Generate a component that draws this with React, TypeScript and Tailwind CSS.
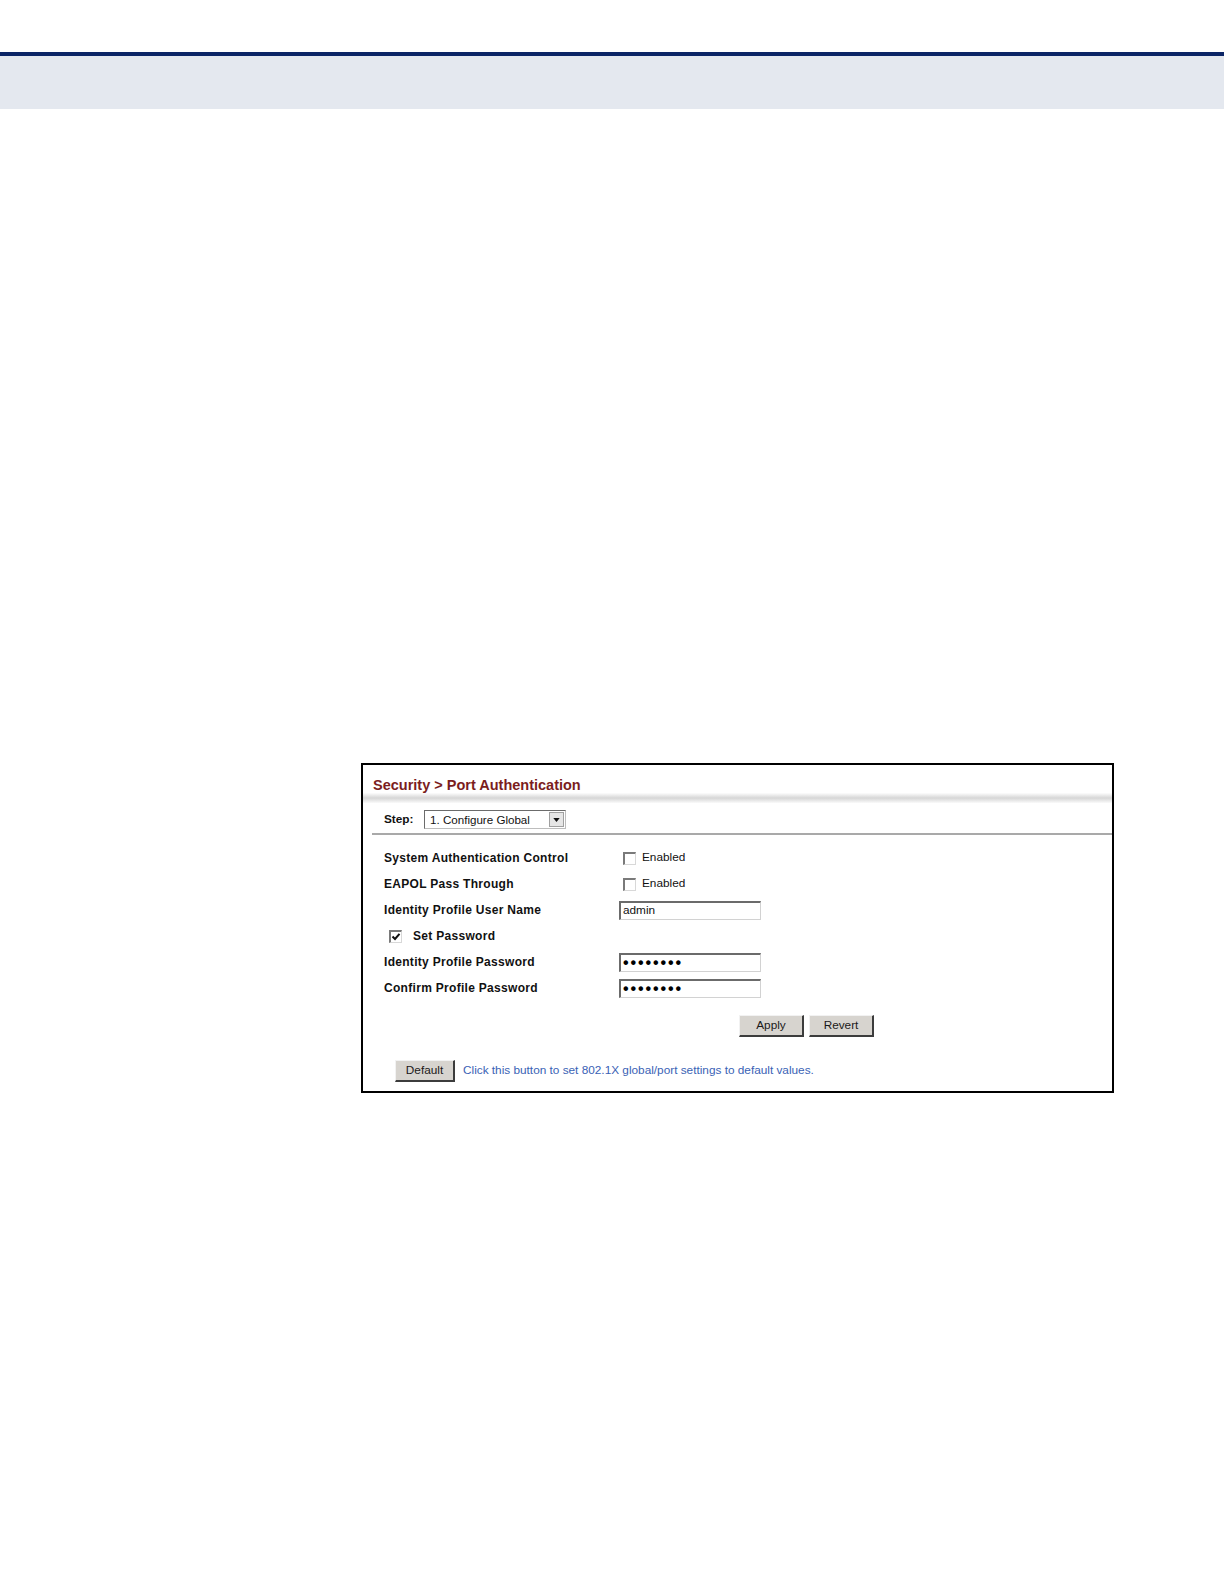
import React from "react";

const FONT = "font-['Liberation_Sans',Arial,sans-serif]";

function Checkbox({ checked = false }: { checked?: boolean }) {
  return (
    <span className="relative inline-block w-[13px] h-[13px] bg-white border-t-2 border-l-2 border-t-[#7a7a7a] border-l-[#7a7a7a] border-b border-r border-b-[#d8d8d8] border-r-[#d8d8d8] shrink-0">
      {checked && (
        <svg viewBox="0 0 10 10" className="absolute left-[0px] top-[0px] w-[10px] h-[10px]">
          <path d="M1.5 4.5 L4 7 L8.5 1.8" fill="none" stroke="#111" strokeWidth="2" />
        </svg>
      )}
    </span>
  );
}

function TextBox({ children }: { children: React.ReactNode }) {
  return (
    <div className="w-[142px] h-[19px] bg-white border-t-2 border-l-2 border-t-[#6b6b6b] border-l-[#6b6b6b] border-b border-r border-b-[#d2d2d2] border-r-[#d2d2d2] flex items-center pl-[2px] text-[11.8px] text-[#111] leading-none">
      {children}
    </div>
  );
}

function Dots() {
  return (
    <span className="text-[16px] font-bold tracking-[1.9px] leading-none text-black">
      ••••••••
    </span>
  );
}

function Btn({ label, w }: { label: string; w: string }) {
  return (
    <div
      className={`${w} h-[22px] bg-[#d7d4cf] border-t border-l border-t-[#f2f2f2] border-l-[#f2f2f2] border-b-2 border-r-2 border-b-[#3c3c3c] border-r-[#3c3c3c] flex items-center justify-center text-[11.8px] text-[#1a1a1a] leading-none`}
    >
      {label}
    </div>
  );
}

function Row({ label, children }: { label: React.ReactNode; children?: React.ReactNode }) {
  return (
    <div className="h-[26px] flex items-center">
      <div className="w-[235px] text-[12px] font-bold tracking-[0.3px] text-[#111] leading-none">{label}</div>
      {children}
    </div>
  );
}

export default function App() {
  return (
    <div className={`w-[1224px] h-[1584px] bg-white ${FONT} overflow-hidden`}>
      <div className="h-[52px]" />
      <div className="h-[4px] bg-[#0b2566]" />
      <div className="h-[53px] bg-[#e4e8ef]" />

      <div className="ml-[361px] mt-[654px] w-[753px] h-[330px] border-2 border-black flex flex-col bg-white">
        <div className="pl-[10px] pt-[12px] h-[28px] leading-[16px] text-[14.5px] font-bold text-[#7b1d1d]">
          Security &gt; Port Authentication
        </div>
        <div className="h-[10px] bg-linear-to-b from-[#fdfdfd] via-[#d6d6d6] to-[#fafafa]" />

        <div className="flex items-center pl-[21px] mt-[7px] h-[19px]">
          <div className="w-[40px] text-[11.8px] font-bold text-[#111] leading-none">Step:</div>
          <div className="w-[142px] h-[19px] bg-white border border-t-[#6b6b6b] border-l-[#6b6b6b] border-b-[#bdbdbd] border-r-[#bdbdbd] flex items-center justify-between pl-[5px] pr-[1px]">
            <span className="text-[11.6px] text-[#111] leading-none">1. Configure Global</span>
            <span className="w-[15px] h-[15px] bg-[#e6e6e6] border border-[#a0a0a0] flex items-center justify-center">
              <svg viewBox="0 0 8 5" className="w-[7px] h-[4px]">
                <path d="M0 0 H8 L4 5 Z" fill="#111" />
              </svg>
            </span>
          </div>
        </div>
        <div className="ml-[9px] mt-[4px] h-[2px] bg-[#a9a9a9]" />

        <div className="mt-[10px] pl-[21px] flex flex-col">
          <Row label="System Authentication Control">
            <div className="ml-[4px] flex items-center gap-[6px]">
              <Checkbox />
              <span className="text-[11.8px] text-[#111] leading-none">Enabled</span>
            </div>
          </Row>
          <Row label="EAPOL Pass Through">
            <div className="ml-[4px] flex items-center gap-[6px]">
              <Checkbox />
              <span className="text-[11.8px] text-[#111] leading-none">Enabled</span>
            </div>
          </Row>
          <Row label="Identity Profile User Name">
            <TextBox>admin</TextBox>
          </Row>
          <div className="h-[26px] flex items-center pl-[5px]">
            <Checkbox checked />
            <span className="ml-[11px] text-[12px] font-bold tracking-[0.3px] text-[#111] leading-none">Set Password</span>
          </div>
          <Row label="Identity Profile Password">
            <TextBox>
              <Dots />
            </TextBox>
          </Row>
          <Row label="Confirm Profile Password">
            <TextBox>
              <Dots />
            </TextBox>
          </Row>
        </div>

        <div className="mt-[14px] pl-[376px] flex gap-[5px]">
          <Btn label="Apply" w="w-[65px]" />
          <Btn label="Revert" w="w-[65px]" />
        </div>

        <div className="mt-[23px] pl-[32px] flex items-center gap-[8px]">
          <Btn label="Default" w="w-[60px]" />
          <span className="text-[11.8px] text-[#3a62b5] leading-none">
            Click this button to set 802.1X global/port settings to default values.
          </span>
        </div>
      </div>
    </div>
  );
}
